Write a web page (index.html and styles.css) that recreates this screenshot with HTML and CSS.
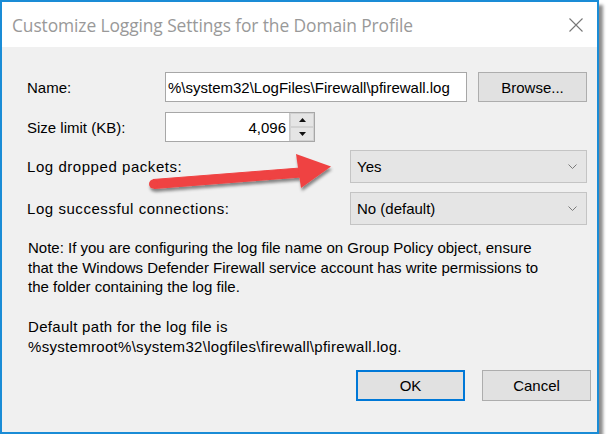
FILE: index.html
```html
<!DOCTYPE html>
<html>
<head>
<meta charset="utf-8">
<link rel="stylesheet" href="styles.css">
</head>
<body>
<div class="window">
  <div class="titlebar">
    <span class="title">Customize Logging Settings for the Domain Profile</span>
    <svg class="close" width="14" height="14" viewBox="0 0 14 14"><path d="M0.5 0.5L13.5 13.5M13.5 0.5L0.5 13.5" stroke="#777" stroke-width="1.1" fill="none"/></svg>
  </div>
  <div class="content">
    <div class="row row-input">
      <span class="lbl lbl-short">Name:</span>
      <div class="field name-field">%\system32\LogFiles\Firewall\pfirewall.log</div>
      <div class="btn browse">Browse...</div>
    </div>
    <div class="row row-input row-size">
      <span class="lbl lbl-short">Size limit (KB):</span>
      <div class="field size-field">
        <span class="num">4,096</span>
        <div class="spin">
          <div class="spin-btn"><svg width="7" height="4" viewBox="0 0 7 4"><path d="M0 4L3.5 0L7 4Z" fill="#111"/></svg></div>
          <div class="spin-btn"><svg width="7" height="4" viewBox="0 0 7 4"><path d="M0 0L3.5 4L7 0Z" fill="#111"/></svg></div>
        </div>
      </div>
    </div>
    <div class="row row-select row-dropped">
      <span class="lbl lbl-long">Log dropped packets:</span>
      <div class="select"><span>Yes</span><svg class="chev" width="9" height="5" viewBox="0 0 9 5"><path d="M0.5 0.5L4.5 4.5L8.5 0.5" stroke="#7a7a7a" stroke-width="1" fill="none"/></svg></div>
    </div>
    <div class="row row-select row-success">
      <span class="lbl lbl-long">Log successful connections:</span>
      <div class="select"><span>No (default)</span><svg class="chev" width="9" height="5" viewBox="0 0 9 5"><path d="M0.5 0.5L4.5 4.5L8.5 0.5" stroke="#7a7a7a" stroke-width="1" fill="none"/></svg></div>
    </div>
    <div class="note">
      <p>Note: If you are configuring the log file name on Group Policy object, ensure<br>that the Windows Defender Firewall service account has write permissions to<br>the folder containing the log file.</p>
      <p class="path">Default path for the log file is<br>%systemroot%\system32\logfiles\firewall\pfirewall.log.</p>
    </div>
    <div class="buttons">
      <div class="btn ok">OK</div>
      <div class="btn cancel">Cancel</div>
    </div>
  </div>
  <svg class="arrow" width="609" height="445" viewBox="0 0 609 445">
    <defs>
      <filter id="sh" x="-20%" y="-50%" width="140%" height="200%">
        <feDropShadow dx="1" dy="3" stdDeviation="1.8" flood-color="#000" flood-opacity="0.45"/>
      </filter>
    </defs>
    <g filter="url(#sh)" fill="#ef4242">
      <path d="M153 179.5L300 168L301 177L154 188.5Z" stroke="#ef4242" stroke-width="1"/>
      <circle cx="153.5" cy="184" r="4.5"/>
      <path d="M296 154L331 166.5L301 188Z"/>
    </g>
  </svg>
</div>
</body>
</html>
```

FILE: styles.css
```css
html, body {
  margin: 0;
  padding: 0;
  background: #ffffff;
}

.window {
  position: relative;
  width: 599px;
  height: 434px;
  box-sizing: border-box;
  border: 2px solid #1a8cd6;
  background: #f0f0f0;
  box-shadow: 4px 5px 3px rgba(0, 0, 0, 0.45);
  font-family: "Liberation Sans", Arial, sans-serif;
  font-size: 15px;
  color: #000;
}

.titlebar {
  height: 45px;
  background: #ffffff;
  display: flex;
  align-items: center;
  justify-content: space-between;
  padding: 0 14px 0 10px;
}

.title {
  font-family: "Open Sans", "Noto Sans", sans-serif;
  font-size: 17.4px;
  color: #999999;
  letter-spacing: -0.1px;
}

.close {
  display: block;
}

.content {
  display: flex;
  flex-direction: column;
  padding: 25px 10px 31px 25px;
}

.row {
  display: flex;
  align-items: center;
}

.row-input { height: 30px; }
.row-size { margin-top: 10px; }
.row-select { height: 33px; }
.row-dropped { margin-top: 8px; }
.row-success { margin-top: 9px; }

.lbl-short { width: 138px; flex: none; }
.lbl-long { width: 323px; flex: none; letter-spacing: 0.55px; }

.field {
  box-sizing: border-box;
  height: 30px;
  background: #ffffff;
  border: 1px solid #a7a7a7;
  display: flex;
  align-items: center;
  white-space: nowrap;
  overflow: hidden;
}

.name-field {
  width: 302px;
  padding-left: 2px;
}

.size-field {
  width: 150px;
  justify-content: space-between;
}

.num {
  flex: 1;
  text-align: right;
  padding-right: 3px;
}

.spin {
  width: 24px;
  height: 28px;
  display: flex;
  flex-direction: column;
  background: #f0f0f0;
  border-left: 1px solid #c9c9c9;
}

.spin-btn {
  flex: 1;
  display: flex;
  align-items: center;
  justify-content: center;
  background: #e5e5e5;
  border: 1px solid #d2d2d2;
}

.spin-btn svg { display: block; }

.btn {
  box-sizing: border-box;
  width: 109px;
  height: 30px;
  background: #e1e1e1;
  border: 1px solid #adadad;
  display: flex;
  align-items: center;
  justify-content: center;
}

.browse { margin-left: 11px; }

.select {
  box-sizing: border-box;
  width: 237px;
  height: 33px;
  background: #e5e5e5;
  border: 1px solid #c4c4c4;
  display: flex;
  align-items: center;
  justify-content: space-between;
  padding: 0 9px 0 6px;
}

.chev { display: block; }

.note {
  margin-top: 13px;
  line-height: 19.5px;
  padding-left: 1px;
}

.note p { margin: 0; }
.note .path { margin-top: 20.5px; letter-spacing: 0.3px; }

.buttons {
  display: flex;
  justify-content: flex-end;
  gap: 17px;
  margin-top: 14px;
  margin-right: -4px;
}

.buttons .btn { height: 31px; }

.ok {
  border: 2px solid #0078d7;
}

.arrow {
  position: absolute;
  left: -2px;
  top: -2px;
  pointer-events: none;
}
```
